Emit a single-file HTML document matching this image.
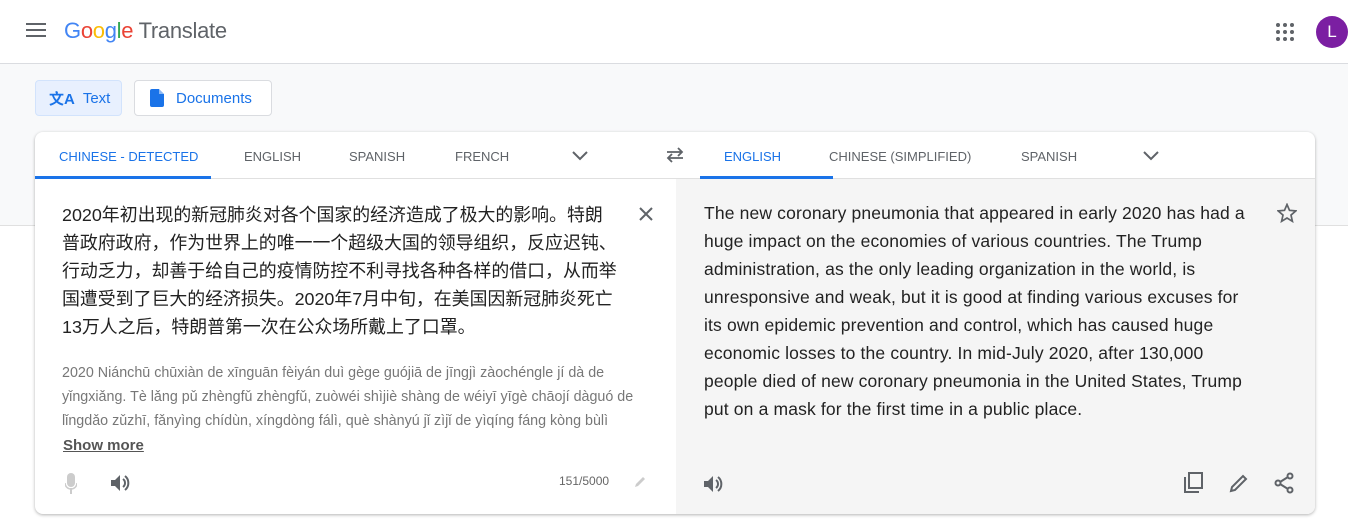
<!DOCTYPE html>
<html><head><meta charset="utf-8"><style>
*{margin:0;padding:0;box-sizing:border-box}
body{width:1348px;height:522px;overflow:hidden;background:#fff;font-family:"Liberation Sans","Noto Sans CJK SC",sans-serif;position:relative}
.top{height:64px;border-bottom:1px solid #dadce0;position:relative}
.band{position:absolute;top:64px;left:0;width:1348px;height:162px;background:#f8f9fa;border-bottom:1px solid #e0e0e0}
.btn{position:absolute;top:80px;height:36px;border-radius:4px;font-size:15px;color:#1a73e8;display:flex;align-items:center}
.card{position:absolute;left:35px;top:132px;width:1280px;height:382px;background:#fff;border-radius:8px;box-shadow:0 1px 3px rgba(0,0,0,.3);overflow:hidden}
.tabs{height:47px;border-bottom:1px solid #e0e0e0;position:relative;font-size:13px;color:#5f6368}
.tabs span{position:absolute;top:17px}
.right{position:absolute;left:641px;top:47px;width:639px;height:335px;background:#f5f5f5}
.src{position:absolute;left:27px;top:69px;font-size:17.9px;line-height:28px;color:#222;white-space:nowrap}
.pin{position:absolute;left:27px;top:229px;font-size:14.3px;line-height:24px;color:#777;white-space:nowrap}
.tr{position:absolute;left:28px;top:20px;font-size:17.5px;line-height:28px;color:#222;white-space:nowrap;letter-spacing:0.15px}
</style></head><body>
<div class="top">
<svg style="position:absolute;left:26px;top:22px" width="20" height="16"><rect y="1" width="20" height="2" fill="#5f6368"/><rect y="7" width="20" height="2" fill="#5f6368"/><rect y="13" width="20" height="2" fill="#5f6368"/></svg>
<div style="position:absolute;left:64px;top:18px;font-size:22px;letter-spacing:-0.3px"><span style="color:#4285f4">G</span><span style="color:#ea4335">o</span><span style="color:#fbbc05">o</span><span style="color:#4285f4">g</span><span style="color:#34a853">l</span><span style="color:#ea4335">e</span> <span style="color:#5f6368">Translate</span></div>
<svg style="position:absolute;left:1275px;top:22px" width="20" height="20" fill="#5f6368"><circle cx="3" cy="3" r="2"/><circle cx="10" cy="3" r="2"/><circle cx="17" cy="3" r="2"/><circle cx="3" cy="10" r="2"/><circle cx="10" cy="10" r="2"/><circle cx="17" cy="10" r="2"/><circle cx="3" cy="17" r="2"/><circle cx="10" cy="17" r="2"/><circle cx="17" cy="17" r="2"/></svg>
<div style="position:absolute;left:1316px;top:16px;width:32px;height:32px;border-radius:50%;background:#7b1fa2;color:#fff;font-size:17px;text-align:center;line-height:32px">L</div>
</div>
<div class="band"></div>
<div class="btn" style="left:35px;width:87px;background:#e8f0fe;border:1px solid #d2e3fc"><span style="margin-left:13px;font-size:15px;font-weight:bold">文A</span><span style="margin-left:8px;font-size:15px">Text</span></div>
<div class="btn" style="left:134px;width:138px;background:#fff;border:1px solid #dadce0"><svg style="margin-left:15px" width="14" height="18"><path d="M2 0h7l5 5v11a2 2 0 0 1-2 2H2a2 2 0 0 1-2-2V2a2 2 0 0 1 2-2z" fill="#1a73e8"/><path d="M9 0v5h5" fill="#fff" opacity=".5"/></svg><span style="margin-left:12px">Documents</span></div>
<div class="card">
<div class="tabs">
<span style="left:24px;color:#1a73e8">CHINESE - DETECTED</span>
<div style="position:absolute;left:0;top:44px;width:176px;height:3px;background:#1a73e8"></div>
<span style="left:209px">ENGLISH</span><span style="left:314px">SPANISH</span><span style="left:420px">FRENCH</span>
<svg style="position:absolute;left:537px;top:19px" width="16" height="10"><path d="M1 1l7 7 7-7" stroke="#5f6368" stroke-width="2" fill="none"/></svg>
<svg style="position:absolute;left:630px;top:15px" width="20" height="16" stroke="#5f6368" stroke-width="1.8" fill="none"><path d="M2 5h15M13 1l4 4-4 4M18 11H3M7 7l-4 4 4 4"/></svg>
<span style="left:689px;color:#1a73e8">ENGLISH</span>
<div style="position:absolute;left:665px;top:44px;width:133px;height:3px;background:#1a73e8"></div>
<span style="left:794px">CHINESE (SIMPLIFIED)</span><span style="left:986px">SPANISH</span>
<svg style="position:absolute;left:1108px;top:19px" width="16" height="10"><path d="M1 1l7 7 7-7" stroke="#5f6368" stroke-width="2" fill="none"/></svg>
</div>
<div class="src">2020年初出现的新冠肺炎对各个国家的经济造成了极大的影响。特朗<br>普政府政府，作为世界上的唯一一个超级大国的领导组织，反应迟钝、<br>行动乏力，却善于给自己的疫情防控不利寻找各种各样的借口，从而举<br>国遭受到了巨大的经济损失。2020年7月中旬，在美国因新冠肺炎死亡<br>13万人之后，特朗普第一次在公众场所戴上了口罩。</div>
<svg style="position:absolute;left:604px;top:75px" width="14" height="14" stroke="#5f6368" stroke-width="2"><path d="M1 1l12 12M13 1L1 13"/></svg>
<div class="pin">2020 Niánchū chūxiàn de xīnguān fèiyán duì gège guójiā de jīngjì zàochéngle jí dà de<br>yǐngxiǎng. Tè lǎng pǔ zhèngfǔ zhèngfǔ, zuòwéi shìjiè shàng de wéiyī yīgè chāojí dàguó de<br>lǐngdǎo zǔzhī, fǎnyìng chídùn, xíngdòng fálì, què shànyú jǐ zìjǐ de yìqíng fáng kòng bùlì</div>
<div style="position:absolute;left:28px;top:305px;font-size:15px;font-weight:bold;color:#555;text-decoration:underline">Show more</div>
<svg style="position:absolute;left:30px;top:341px" width="12" height="22" fill="#ccc"><rect x="2" y="0" width="8" height="14" rx="4"/><path d="M0 10a6 6 0 0 0 12 0" stroke="#ccc" stroke-width="1.5" fill="none"/><rect x="5" y="15" width="2" height="6"/></svg>
<svg style="position:absolute;left:76px;top:342px" width="20" height="18" fill="#5f6368"><path d="M0 6h4l5-5v16l-5-5H0z"/><path d="M12 5a5 5 0 0 1 0 8M14 2a9 9 0 0 1 0 14" stroke="#5f6368" stroke-width="2" fill="none"/></svg>
<div style="position:absolute;left:524px;top:342px;font-size:12px;color:#666">151/5000</div>
<svg style="position:absolute;left:598px;top:343px" width="14" height="14"><path d="M2 12l1-3 7-7 2 2-7 7z" fill="#ccc"/></svg>
<div class="right">
<div class="tr">The new coronary pneumonia that appeared in early 2020 has had a<br>huge impact on the economies of various countries. The Trump<br>administration, as the only leading organization in the world, is<br>unresponsive and weak, but it is good at finding various excuses for<br>its own epidemic prevention and control, which has caused huge<br>economic losses to the country. In mid-July 2020, after 130,000<br>people died of new coronary pneumonia in the United States, Trump<br>put on a mask for the first time in a public place.</div>
<svg style="position:absolute;left:601px;top:24px" width="20" height="20"><path d="M10 1.5l2.5 5.8 6.3.6-4.8 4.2 1.4 6.2L10 15l-5.4 3.3 1.4-6.2L1.2 7.9l6.3-.6z" fill="none" stroke="#5f6368" stroke-width="1.7"/></svg>
<svg style="position:absolute;left:28px;top:296px" width="20" height="18" fill="#5f6368"><path d="M0 6h4l5-5v16l-5-5H0z"/><path d="M12 5a5 5 0 0 1 0 8M14 2a9 9 0 0 1 0 14" stroke="#5f6368" stroke-width="2" fill="none"/></svg>
<svg style="position:absolute;left:508px;top:293px" width="20" height="22" fill="none" stroke="#5f6368" stroke-width="2"><path d="M1 5v15h14"/><rect x="5" y="1" width="13" height="15"/></svg>
<svg style="position:absolute;left:553px;top:294px" width="20" height="20" fill="none" stroke="#5f6368" stroke-width="2"><path d="M2 18l1-4L14 3l3 3L6 17z"/></svg>
<svg style="position:absolute;left:598px;top:293px" width="20" height="22" fill="none" stroke="#5f6368" stroke-width="2"><circle cx="16" cy="4" r="2.5"/><circle cx="4" cy="11" r="2.5"/><circle cx="16" cy="18" r="2.5"/><path d="M6 10l8-5M6 12l8 5"/></svg>
</div>
</div>
</body></html>
